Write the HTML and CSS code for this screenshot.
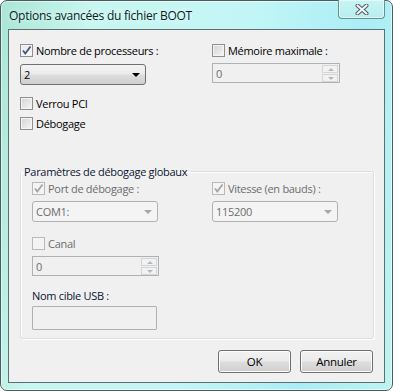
FILE: index.html
```html
<!DOCTYPE html>
<html lang="fr">
<head>
  <meta charset="UTF-8">
  <title>Options avancées du fichier BOOT</title>
  <link rel="stylesheet" href="styles.css">
</head>
<body>
  <div class="window">
    <div class="titlebar">
      <span class="title">Options avancées du fichier BOOT</span>
      <div class="close">
        <svg width="14" height="11" viewBox="0 0 14 11">
          <path d="M2.5 1.5 L11.5 9.5 M11.5 1.5 L2.5 9.5" stroke="#4a5560" stroke-width="4" stroke-linecap="round"/>
          <path d="M2.5 1.5 L11.5 9.5 M11.5 1.5 L2.5 9.5" stroke="#f2f4f6" stroke-width="2.2" stroke-linecap="round"/>
        </svg>
      </div>
    </div>

    <div class="client">
      <div class="cols">
        <div class="field">
          <label class="check"><span class="box on"><svg width="11" height="11" viewBox="0 0 11 11"><path d="M2 5.5 L4.3 8.5 L9.5 1.5" fill="none" stroke="#3f5585" stroke-width="1.8"/></svg></span>Nombre de processeurs :</label>
          <div class="combo wide"><span>2</span><span class="arrow"></span></div>
        </div>
        <div class="field">
          <label class="check"><span class="box"></span>Mémoire maximale :</label>
          <div class="spin off right"><span>0</span><div class="spin-btns"><span class="up"></span><span class="down"></span></div></div>
        </div>
      </div>

      <label class="check pci"><span class="box"></span>Verrou PCI</label>
      <label class="check debug"><span class="box"></span>Débogage</label>

      <fieldset class="group">
        <legend>Paramètres de débogage globaux</legend>
        <div class="cols inner">
          <div class="field">
            <label class="check off"><span class="box on"><svg width="11" height="11" viewBox="0 0 11 11"><path d="M2 5.5 L4.3 8.5 L9.5 1.5" fill="none" stroke="#a3a3a3" stroke-width="1.8"/></svg></span>Port de débogage :</label>
            <div class="combo off"><span>COM1:</span><span class="arrow"></span></div>
          </div>
          <div class="field">
            <label class="check off"><span class="box on"><svg width="11" height="11" viewBox="0 0 11 11"><path d="M2 5.5 L4.3 8.5 L9.5 1.5" fill="none" stroke="#a3a3a3" stroke-width="1.8"/></svg></span>Vitesse (en bauds) :</label>
            <div class="combo off right"><span>115200</span><span class="arrow"></span></div>
          </div>
        </div>

        <div class="field canal">
          <label class="check off"><span class="box"></span>Canal</label>
          <div class="spin off"><span>0</span><div class="spin-btns"><span class="up"></span><span class="down"></span></div></div>
        </div>

        <div class="field usb">
          <div class="label">Nom cible USB :</div>
          <div class="textbox"></div>
        </div>
      </fieldset>

      <div class="buttons">
        <button class="btn">OK</button>
        <button class="btn">Annuler</button>
      </div>
    </div>
  </div>
</body>
</html>
```

FILE: styles.css
```css
body {
margin: 0;
background: #ffffff;
font-family: "Open Sans", "Noto Sans", Arial, sans-serif;
font-size: 12px;
color: #000;
}

.window {
width: 393px;
height: 391px;
box-sizing: border-box;
border: 1px solid #4b5a5c;
border-radius: 7px;
padding: 0 7px 7px 7px;
background: linear-gradient(100deg, #a9e6d4 0%, #c8f6f0 20%, #c2f6f6 55%, #a9eef6 80%, #bdf4f0 100%);
box-shadow: inset 0 0 0 1px rgba(255, 255, 255, 0.55);
display: flex;
flex-direction: column;
}

.titlebar {
height: 28px;
display: flex;
justify-content: space-between;
align-items: flex-start;
}

.title {
margin-top: 6px;
margin-left: 1px;
font-size: 12px;
letter-spacing: -0.25px;
color: #0b1a24;
text-shadow: 0 0 6px rgba(255, 255, 255, 0.9);
}

.close {
width: 45px;
height: 18px;
margin-top: -1px;
border: 1px solid #6f8c8e;
border-top: none;
border-radius: 0 0 4px 4px;
background: linear-gradient(#c8f4f4, #b8eeee);
box-shadow: inset 0 0 0 1px rgba(255, 255, 255, 0.5);
display: flex;
align-items: center;
justify-content: center;
}

.client {
flex: 1;
background: #f0f0f0;
border: 1px solid #5f6e70;
padding: 13px 10px 0 11px;
font-size: 11px;
letter-spacing: -0.3px;
}

.cols {
display: grid;
grid-template-columns: 192px 1fr;
}

.cols.inner {
grid-template-columns: 180px 1fr;
}

.field {
display: flex;
flex-direction: column;
}

.check {
height: 15px;
display: flex;
align-items: center;
gap: 3px;
white-space: nowrap;
}

.check.off,
.spin.off,
.combo.off {
color: #6d6d6d;
}

.box {
width: 11px;
height: 11px;
border: 1px solid #8e8f8f;
background: linear-gradient(135deg, #d3d3d3 0%, #ececec 70%, #f7f7f7 100%);
box-shadow: inset 0 0 0 1px #f4f4f4;
display: flex;
align-items: center;
justify-content: center;
}

.box.on {
background: linear-gradient(135deg, #e6e6e6, #ffffff);
}

.check.off .box {
border-color: #b9b9b9;
background: #f4f4f4;
box-shadow: none;
}

.combo {
width: 122px;
height: 19px;
margin-top: 6px;
border: 1px solid #707070;
border-radius: 3px;
background: linear-gradient(#f3f3f3 0%, #ebebeb 48%, #dddddd 52%, #cfcfcf 100%);
display: flex;
align-items: center;
justify-content: space-between;
padding: 0 4px 0 3px;
box-sizing: content-box;
}

.combo.wide {
width: 117px;
}

.combo .arrow {
width: 0;
height: 0;
border-left: 4px solid transparent;
border-right: 4px solid transparent;
border-top: 4px solid #000;
margin-right: 1px;
}

.combo.off {
background: #f4f4f4;
border-color: #adb2b5;
margin-top: 5px;
}

.combo.off .arrow {
border-top-color: #a6a6a6;
}

.combo.off,
.combo.right {
width: 117px;
}

.spin {
width: 123px;
height: 18px;
margin-top: 5px;
border: 1px solid #adb2b5;
background: #f0f0f0;
display: flex;
align-items: center;
justify-content: space-between;
padding: 0 1px 0 3px;
}

.spin.right {
width: 122px;
}

.spin-btns {
width: 16px;
height: 17px;
display: flex;
flex-direction: column;
gap: 1px;
}

.spin-btns span {
flex: 1;
border: 1px solid #d3d6d8;
background: #f2f2f2;
position: relative;
}

.spin-btns .up::after,
.spin-btns .down::after {
content: "";
position: absolute;
left: 5px;
top: 2px;
border-left: 3px solid transparent;
border-right: 3px solid transparent;
}

.spin-btns .up::after {
border-bottom: 3px solid #b8b8b8;
}

.spin-btns .down::after {
border-top: 3px solid #b8b8b8;
}

.pci {
margin-top: 11px;
}

.debug {
margin-top: 5px;
}

.group {
margin: 33px 0 0 0;
padding: 2px 10px 8px 11px;
border: 1px solid #d5dfe5;
border-radius: 3px;
box-shadow: 1px 1px 0 #ffffff, inset 1px 1px 0 #ffffff;
min-width: 0;
}

.group legend {
padding: 0 3px;
margin-left: -11px;
line-height: 15px;
color: #0a1430;
}

.canal {
margin-top: 14px;
}

.canal .spin {
width: 121px;
}

.usb {
margin-top: 12px;
}

.label {
height: 15px;
line-height: 15px;
color: #0a1430;
}

.textbox {
width: 123px;
height: 22px;
margin-top: 3px;
border: 1px solid #adb2b5;
border-radius: 1px;
background: #f0f0f0;
}

.buttons {
margin-top: 11px;
display: flex;
justify-content: flex-end;
gap: 9px;
padding-right: 1px;
}

.btn {
width: 73px;
height: 23px;
font-family: inherit;
font-size: 11.5px;
letter-spacing: -0.3px;
color: #000;
border: 1px solid #707070;
border-radius: 3px;
background: linear-gradient(#f2f2f2 0%, #ebebeb 48%, #dddddd 52%, #cfcfcf 100%);
box-shadow: inset 0 0 0 1px #fcfcfc;
padding: 0;
}
```
